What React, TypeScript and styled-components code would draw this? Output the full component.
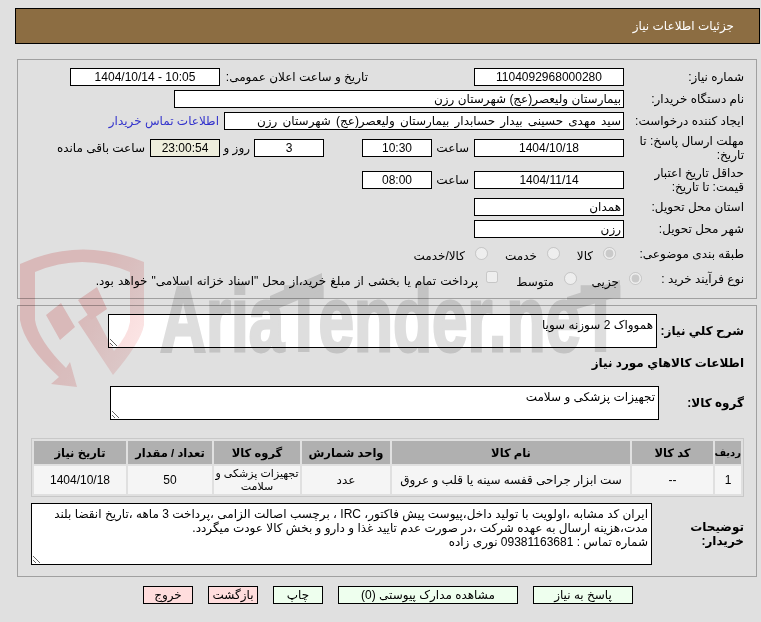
import * as React from 'react'
import styled, { createGlobalStyle } from 'styled-components'

const FONT = `"Liberation Sans", "DejaVu Sans", sans-serif`

const GlobalStyle = createGlobalStyle`
  html, body {
    margin: 0;
    padding: 0;
    background: #e0e0e0;
  }
  body {
    font-family: ${FONT};
    font-size: 12px;
    color: #000;
  }
`

const columns = [
  { title: 'ردیف', width: 26 },
  { title: 'کد کالا', width: 81 },
  { title: 'نام کالا', width: 238 },
  { title: 'واحد شمارش', width: 88 },
  { title: 'گروه کالا', width: 86 },
  { title: 'تعداد / مقدار', width: 84 },
  { title: 'تاریخ نیاز', width: 92 },
]

const rowData = ['1', '--', 'ست ابزار جراحی قفسه سینه یا قلب و عروق', 'عدد', 'تجهیزات پزشکی و\nسلامت', '50', '1404/10/18']

const description = `ایران کد مشابه ،اولویت با تولید داخل،پیوست پیش فاکتور، IRC ، برچسب اصالت الزامی ،پرداخت 3 ماهه ،تاریخ انقضا بلند مدت،هزینه ارسال به عهده شرکت ،در صورت عدم تایید غذا و دارو و بخش کالا عودت میگردد.
شماره تماس : 09381163681 نوری زاده`

export default function App() {
  return (
    <Page dir="rtl">
      <GlobalStyle />
      <Header>جزئیات اطلاعات نیاز</Header>

      <FormPanel>
        <Row>
          <Label>شماره نیاز:</Label>
          <Field $w={150} $center readOnly value="1104092968000280" />
          <Label $w={144} $ml={4} $mr={106}>تاریخ و ساعت اعلان عمومی:</Label>
          <Field $w={150} $center readOnly value="10:05 - 1404/10/14" />
        </Row>
        <Row>
          <Label>نام دستگاه خریدار:</Label>
          <Field $w={450} readOnly value="بیمارستان ولیعصر(عج) شهرستان رزن" />
        </Row>
        <Row>
          <Label>ایجاد کننده درخواست:</Label>
          <Field $w={400} $spread readOnly value="سید مهدی حسینی بیدار حسابدار بیمارستان ولیعصر(عج) شهرستان رزن" />
          <ContactLink href="#">اطلاعات تماس خریدار</ContactLink>
        </Row>
        <TallRow>
          <Label>مهلت ارسال پاسخ: تا تاریخ:</Label>
          <Field $w={150} $center readOnly value="1404/10/18" />
          <Label $w={33} $mr={5} $ml={4}>ساعت</Label>
          <Field $w={70} $center readOnly value="10:30" />
          <Field $w={70} $center $mr={38} readOnly value="3" />
          <Label $w={26} $mr={4} $ml={4}>روز و</Label>
          <Field $w={70} $center $timer readOnly value="23:00:54" />
          <Label $w={90} $mr={5}>ساعت باقی مانده</Label>
        </TallRow>
        <TallRow>
          <Label>حداقل تاریخ اعتبار قیمت: تا تاریخ:</Label>
          <Field $w={150} $center readOnly value="1404/11/14" />
          <Label $w={33} $mr={5} $ml={4}>ساعت</Label>
          <Field $w={70} $center readOnly value="08:00" />
        </TallRow>
        <Row>
          <Label>استان محل تحویل:</Label>
          <Field $w={150} readOnly value="همدان" />
        </Row>
        <Row>
          <Label>شهر محل تحویل:</Label>
          <Field $w={150} readOnly value="رزن" />
        </Row>
        <ChoiceRow>
          <Label $ml={18}>طبقه بندی موضوعی:</Label>
          <Radio type="radio" disabled defaultChecked name="subject" $lift={2} />
          <ChoiceText $w={33} $drop={3}>کالا</ChoiceText>
          <Radio type="radio" disabled name="subject" $lift={2} />
          <ChoiceText $w={49} $drop={3}>خدمت</ChoiceText>
          <Radio type="radio" disabled name="subject" $lift={2} />
          <ChoiceText $drop={3}>کالا/خدمت</ChoiceText>
        </ChoiceRow>
        <ChoiceRow>
          <RaisedLabel $w={92} $ml={10}>نوع فرآیند خرید :</RaisedLabel>
          <Radio type="radio" disabled defaultChecked name="kind" $lift={8} />
          <ChoiceText $w={42}>جزیی</ChoiceText>
          <Radio type="radio" disabled name="kind" $lift={8} />
          <ChoiceText $w={56}>متوسط</ChoiceText>
          <Check type="checkbox" disabled />
          <PaymentNote>پرداخت تمام یا بخشی از مبلغ خرید،از محل "اسناد خزانه اسلامی" خواهد بود.</PaymentNote>
        </ChoiceRow>
      </FormPanel>

      <GoodsPanel>
        <AreaRow>
          <BoldLabel $w={87}>شرح کلي نیاز:</BoldLabel>
          <Area $w={549} $h={34} readOnly defaultValue="هموواک 2 سوزنه سویا" />
        </AreaRow>
        <SectionTitle>اطلاعات کالاهاي مورد نیاز</SectionTitle>
        <AreaRow>
          <BoldLabel $w={85}>گروه کالا:</BoldLabel>
          <Area $w={549} $h={34} readOnly defaultValue="تجهیزات پزشکی و سلامت" />
        </AreaRow>
        <ItemsTable>
          <thead>
            <tr>
              {columns.map(c => (
                <HeadCell key={c.title} $narrow={c.width < 30} style={{ width: c.width }}>{c.title}</HeadCell>
              ))}
            </tr>
          </thead>
          <tbody>
            <tr>
              {rowData.map(v => <DataCell key={v} $compact={v.includes('\n')}>{v}</DataCell>)}
            </tr>
          </tbody>
        </ItemsTable>
        <AreaRow>
          <BoldLabel $w={92}>توضیحات<br />خریدار:</BoldLabel>
          <Area $w={621} $h={62} readOnly defaultValue={description} />
        </AreaRow>
      </GoodsPanel>

      <Buttons>
        <ActionButton $w={100}>پاسخ به نیاز</ActionButton>
        <ActionButton $w={180}>مشاهده مدارک پیوستی (0)</ActionButton>
        <ActionButton $w={50}>چاپ</ActionButton>
        <ActionButton $w={50} $danger>بازگشت</ActionButton>
        <ActionButton $w={50} $danger>خروج</ActionButton>
      </Buttons>

      <Watermark viewBox="0 0 761 622" aria-hidden="true">
        <defs>
          <linearGradient id="shieldFill" x1="0" y1="0" x2="1" y2="0.6">
            <stop offset="0" stopColor="#f7d3d3" />
            <stop offset="0.55" stopColor="#f7d3d3" />
            <stop offset="1" stopColor="#fbe4e4" />
          </linearGradient>
        </defs>
        <path
          fill="url(#shieldFill)"
          d="M20 264 Q80 236 144 262 L144 325 Q141 342 113 375 L78 322 L93 311 L114 351 Q128 335 130 322 L130 272 Q82 252 35 272 L35 320 Q38 340 66 368 L70 362 L77 387 L51 384 L59 377 Q24 345 20 320 Z"
        />
        <path fill="#f7d3d3" d="M46 315 L61 303 L75 327 L60 340 Z M78 300 L97 287 L107 309 L91 320 Z" />
        <LogoText x="160" y="351" textLength="460" lengthAdjust="spacingAndGlyphs">AriaTender.neT</LogoText>
        <LogoBar points="270,296 322,273 322,290 270,312" />
        <LogoBar points="567,297 620,280 620,296 567,312" />
      </Watermark>
    </Page>
  )
}

const Page = styled.div`
  position: relative;
  box-sizing: border-box;
  width: 761px;
  height: 622px;
  overflow: hidden;
  padding: 8px 1px 0 15px;
`

const Header = styled.div`
  box-sizing: border-box;
  height: 36px;
  display: flex;
  align-items: center;
  padding: 0 25px;
  background: #8c6d42;
  border: 1px solid #000;
  color: #fff;
  font-size: 12px;
`

const Panel = styled.div`
  box-sizing: border-box;
  margin: 0 3px 0 2px;
  padding-right: 12px;
  border: 1px solid #a0a0a0;
`

const FormPanel = styled(Panel)`
  height: 240px;
  margin-top: 15px;
  padding-top: 8px;
  display: flex;
  flex-direction: column;
  gap: 4px;
`

const GoodsPanel = styled(Panel)`
  height: 272px;
  margin-top: 6px;
  padding-top: 8px;
`

const Row = styled.div`
  display: flex;
  align-items: center;
  height: 18px;
`

const TallRow = styled(Row)`
  height: 28px;
`

const ChoiceRow = styled(Row)`
  height: 24px;
`

const Label = styled.label<{ $w?: number; $ml?: number; $mr?: number }>`
  flex: none;
  width: ${p => p.$w ?? 110}px;
  margin-left: ${p => p.$ml ?? 10}px;
  margin-right: ${p => p.$mr ?? 0}px;
  line-height: 14px;
  white-space: ${p => (p.$w ? 'nowrap' : 'normal')};
`

const RaisedLabel = styled(Label)`
  margin-bottom: 6px;
`

const BoldLabel = styled(Label)`
  font-weight: bold;
  margin-left: 0;
`

const Field = styled.input<{ $w: number; $center?: boolean; $timer?: boolean; $mr?: number; $spread?: boolean }>`
  flex: none;
  box-sizing: border-box;
  width: ${p => p.$w}px;
  height: 18px;
  margin: 0 ${p => p.$mr ?? 0}px 0 0;
  padding: 0 2px;
  border: 1px solid #000;
  border-radius: 0;
  outline: none;
  background: ${p => (p.$timer ? '#eeeedd' : '#fff')};
  color: #000;
  font-family: ${FONT};
  font-size: 12px;
  word-spacing: ${p => (p.$spread ? '1.8px' : 'normal')};
  text-align: ${p => (p.$center ? 'center' : 'right')};
`

const ContactLink = styled.a`
  margin-right: 5px;
  color: #3333cc;
  text-decoration: none;
  white-space: nowrap;
`

const Radio = styled.input<{ $lift: number }>`
  flex: none;
  width: 13px;
  height: 13px;
  margin: 0 0 ${p => p.$lift}px 0;
`

const Check = styled.input`
  flex: none;
  width: 12px;
  height: 12px;
  margin: 0 0 10px 0;
`

const ChoiceText = styled.span<{ $w?: number; $drop?: number }>`
  flex: none;
  ${p => (p.$w ? `width: ${p.$w}px;` : '')}
  margin-right: 10px;
  margin-top: ${p => p.$drop ?? 0}px;
  white-space: nowrap;
`

const PaymentNote = styled.span`
  flex: none;
  margin: 0 8px 2px 0;
  word-spacing: 0.7px;
  white-space: nowrap;
`

const AreaRow = styled.div`
  display: flex;
  align-items: center;
  margin-bottom: 6px;
`

const Area = styled.textarea<{ $w: number; $h: number }>`
  flex: none;
  display: block;
  box-sizing: border-box;
  width: ${p => p.$w}px;
  height: ${p => p.$h}px;
  margin: 0;
  padding: 3px 3px 0;
  overflow: hidden;
  border: 1px solid #000;
  border-radius: 0;
  outline: none;
  background: #fff;
  color: #000;
  font-family: ${FONT};
  font-size: 12px;
  line-height: 14px;
`

const SectionTitle = styled.div`
  height: 16px;
  line-height: 16px;
  margin: 7px 0 15px;
  font-weight: bold;
`

const ItemsTable = styled.table`
  box-sizing: border-box;
  width: 712px;
  height: 59px;
  margin: 18px 0 6px;
  border: 1px solid #c8c8c8;
  border-spacing: 2px;
  table-layout: fixed;
`

const HeadCell = styled.th<{ $narrow?: boolean }>`
  height: 23px;
  padding: 0;
  overflow: hidden;
  background: #b0b0b0;
  font-size: ${p => (p.$narrow ? '10px' : '11.5px')};
  white-space: nowrap;
`

const DataCell = styled.td<{ $compact?: boolean }>`
  height: 28px;
  padding: 0;
  background: #f5f5f5;
  text-align: center;
  font-size: ${p => (p.$compact ? '11px' : '12px')};
  line-height: 13px;
  white-space: pre;
`

const Buttons = styled.div`
  display: flex;
  gap: 15px;
  margin-top: 9px;
  padding-right: 127px;
`

const ActionButton = styled.button<{ $w: number; $danger?: boolean }>`
  flex: none;
  box-sizing: border-box;
  width: ${p => p.$w}px;
  height: 18px;
  padding: 0;
  border: 1px solid #000;
  border-radius: 0;
  background: ${p => (p.$danger ? '#ffdddd' : '#eeffee')};
  color: #000;
  font-family: ${FONT};
  font-size: 12px;
`

const Watermark = styled.svg`
  position: absolute;
  top: 0;
  left: 0;
  width: 761px;
  height: 622px;
  pointer-events: none;
  mix-blend-mode: multiply;
`

const LogoText = styled.text`
  fill: #dedede;
  stroke: #dedede;
  stroke-width: 3px;
  font-family: "Liberation Sans", sans-serif;
  font-weight: bold;
  font-size: 92px;
  direction: ltr;
`

const LogoBar = styled.polygon`
  fill: #dedede;
`
